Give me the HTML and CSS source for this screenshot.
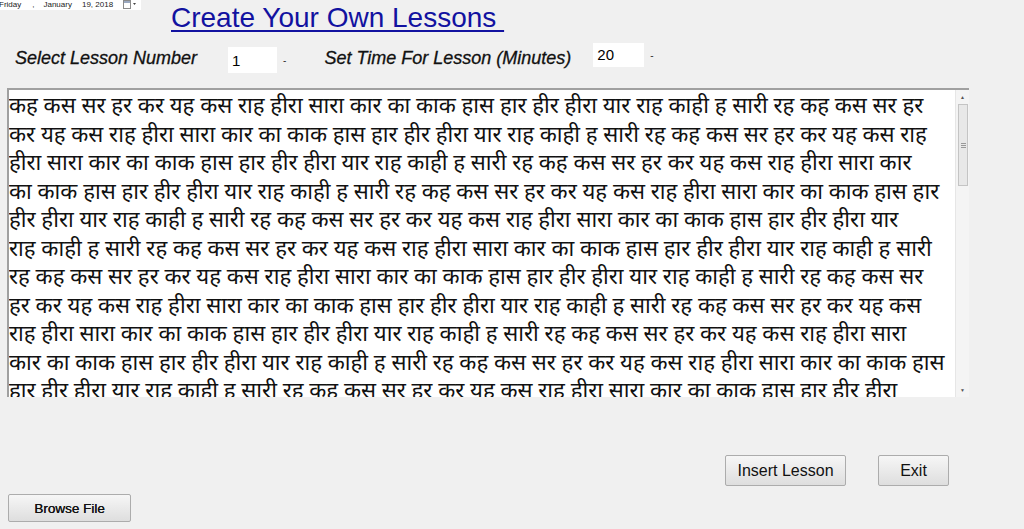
FILE: index.html
```html
<!DOCTYPE html>
<html>
<head>
<meta charset="utf-8">
<link rel="stylesheet" href="styles.css">
</head>
<body>
<div class="page">
  <div class="top">
    <div class="datepicker">
      <span class="d1">Friday</span><span class="d2">,</span><span class="d3">January</span><span class="d4">19, 2018</span>
      <span class="cal">
        <svg width="14" height="10" viewBox="0 0 14 10"><rect x="0.5" y="0.5" width="7" height="8" fill="#fff" stroke="#8a8a8a"/><rect x="1" y="1" width="6" height="2" fill="#9aa8c0"/><path d="M10 3 L13 3 L11.5 5 Z" fill="#444"/></svg>
      </span>
    </div>
    <h1 class="title">Create Your Own Lessons&nbsp;</h1>
  </div>

  <div class="controls">
    <span class="label lbl1">Select Lesson Number</span>
    <div class="combo combo1"><span class="val">1</span><span class="arrow">-</span></div>
    <span class="label lbl2">Set Time For Lesson (Minutes)</span>
    <div class="combo combo2"><span class="val">20</span><span class="arrow">-</span></div>
  </div>

  <div class="textbox">
    <div class="text">
      <div class="ln">कह कस सर हर कर यह कस राह हीरा सारा कार का काक हास हार हीर हीरा यार राह काही ह सारी रह कह कस सर हर</div>
      <div class="ln">कर यह कस राह हीरा सारा कार का काक हास हार हीर हीरा यार राह काही ह सारी रह कह कस सर हर कर यह कस राह</div>
      <div class="ln">हीरा सारा कार का काक हास हार हीर हीरा यार राह काही ह सारी रह कह कस सर हर कर यह कस राह हीरा सारा कार</div>
      <div class="ln">का काक हास हार हीर हीरा यार राह काही ह सारी रह कह कस सर हर कर यह कस राह हीरा सारा कार का काक हास हार</div>
      <div class="ln">हीर हीरा यार राह काही ह सारी रह कह कस सर हर कर यह कस राह हीरा सारा कार का काक हास हार हीर हीरा यार</div>
      <div class="ln">राह काही ह सारी रह कह कस सर हर कर यह कस राह हीरा सारा कार का काक हास हार हीर हीरा यार राह काही ह सारी</div>
      <div class="ln">रह कह कस सर हर कर यह कस राह हीरा सारा कार का काक हास हार हीर हीरा यार राह काही ह सारी रह कह कस सर</div>
      <div class="ln">हर कर यह कस राह हीरा सारा कार का काक हास हार हीर हीरा यार राह काही ह सारी रह कह कस सर हर कर यह कस</div>
      <div class="ln">राह हीरा सारा कार का काक हास हार हीर हीरा यार राह काही ह सारी रह कह कस सर हर कर यह कस राह हीरा सारा</div>
      <div class="ln">कार का काक हास हार हीर हीरा यार राह काही ह सारी रह कह कस सर हर कर यह कस राह हीरा सारा कार का काक हास</div>
      <div class="ln">हार हीर हीरा यार राह काही ह सारी रह कह कस सर हर कर यह कस राह हीरा सारा कार का काक हास हार हीर हीरा</div>
    </div>
    <div class="scrollbar">
      <div class="sb-up">▲</div>
      <div class="sb-track"><div class="sb-thumb"><span class="grip"></span></div></div>
      <div class="sb-down">▼</div>
    </div>
  </div>

  <div class="actions">
    <button class="btn btn-insert">Insert Lesson</button>
    <button class="btn btn-exit">Exit</button>
  </div>
  <div class="browse-row">
    <button class="btn btn-browse">Browse File</button>
  </div>
</div>
</body>
</html>
```
FILE: styles.css
```css
* { box-sizing: border-box; }
html, body { margin: 0; padding: 0; }
body {
  background: #f0f0f0;
  font-family: "Liberation Sans", Arial, sans-serif;
  width: 1024px;
  height: 529px;
  overflow: hidden;
}
.page { width: 1024px; height: 529px; }

.top { display: flex; align-items: flex-start; height: 40px; }
.datepicker {
  display: flex;
  align-items: center;
  width: 141px;
  height: 11px;
  margin-top: -1px;
  background: #fff;
  font-size: 8px;
  color: #222;
  line-height: 10px;
  white-space: nowrap;
}
.datepicker .d1 { margin-left: -1px; }
.datepicker .d2 { margin-left: 11px; }
.datepicker .d3 { margin-left: 9px; }
.datepicker .d4 { margin-left: 10px; }
.datepicker .cal { margin-left: 10px; display: flex; }

.title {
  margin: 2px 0 0 30px;
  font-size: 28px;
  font-weight: normal;
  color: #1212a0;
  text-decoration: underline;
  text-decoration-thickness: 2px;
  text-underline-offset: 3px;
  line-height: 32px;
}

.controls {
  display: flex;
  align-items: flex-start;
  height: 48px;
  padding-left: 15px;
}
.label {
  font-style: italic;
  font-size: 18px;
  color: #111;
  -webkit-text-stroke: 0.3px #111;
}
.lbl1 { margin-top: 8px; }
.lbl2 { margin-top: 8px; margin-left: 38px; }
.combo {
  display: flex;
  align-items: stretch;
  font-size: 15px;
  color: #000;
}
.combo .val { background: #fff; display: flex; align-items: center; padding-left: 4px; }
.combo .arrow { font-size: 10px; color: #333; display: flex; align-items: center; padding-left: 6px; }
.combo1 { height: 26px; margin-left: 31px; margin-top: 7px; }
.combo1 .val { width: 49px; }
.combo2 { height: 24px; margin-left: 22px; margin-top: 3px; }
.combo2 .val { width: 51px; padding-bottom: 2px; }

.textbox {
  display: flex;
  margin-left: 7px;
  width: 962px;
  height: 309px;
  background: #fff;
  border-top: 2px solid #a0a0a0;
  border-left: 2px solid #a0a0a0;
  overflow: hidden;
}
.text {
  flex: 1;
  overflow: hidden;
  padding-top: 4px;
  font-family: "Noto Sans Devanagari", "Noto Serif Devanagari", "Lohit Devanagari", "Mangal", serif;
  font-size: 22.2px;
  color: #111;
}
.ln { white-space: nowrap; height: 28.5px; line-height: 28px; }

.scrollbar {
  width: 14px;
  display: flex;
  flex-direction: column;
  background: #f4f4f4;
  border-left: 1px solid #e6e6e6;
}
.sb-up, .sb-down { height: 14px; font-size: 5px; color: #555; display: flex; align-items: center; justify-content: center; }
.sb-track { flex: 1; }
.sb-thumb {
  margin: 0 1px 0 2px;
  height: 82px;
  background: #e8e8e8;
  border: 1px solid #c4c4c4;
  display: flex;
  align-items: center;
  justify-content: center;
}
.grip { width: 5px; height: 5px; border-top: 1px solid #999; border-bottom: 1px solid #999; position: relative; }
.grip::after { content: ""; position: absolute; left: 0; right: 0; top: 1px; border-top: 1px solid #999; }

.actions {
  display: flex;
  margin-top: 58px;
  padding-left: 725px;
  gap: 32px;
}
.btn {
  font-family: "Liberation Sans", Arial, sans-serif;
  font-size: 16px;
  color: #111;
  background: linear-gradient(#f6f6f6, #dedede);
  border: 1px solid #acacac;
  border-radius: 2px;
  padding: 0;
}
.btn-insert { width: 121px; height: 31px; }
.btn-exit { width: 71px; height: 31px; }
.browse-row { padding-left: 8px; margin-top: 8px; }
.btn-browse { width: 123px; height: 28px; font-size: 13.5px; text-shadow: 0.3px 0 0 #111; }
```
